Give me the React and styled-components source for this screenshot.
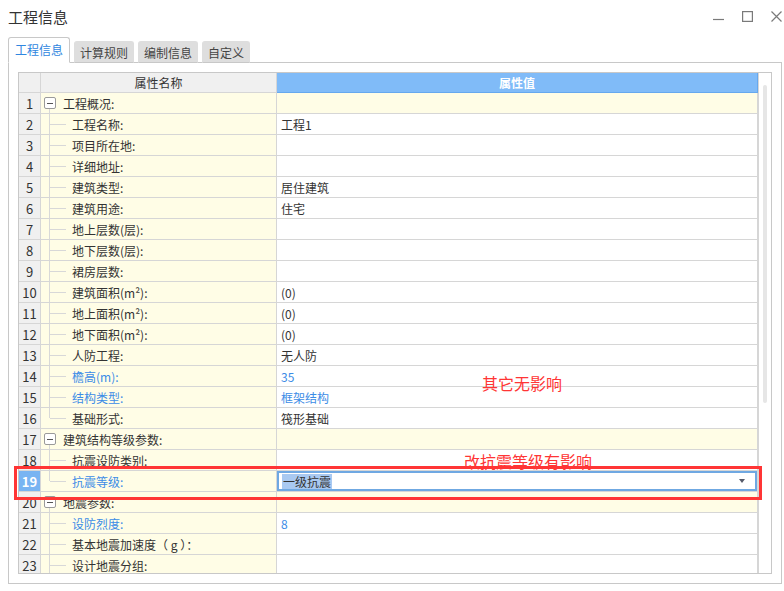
import React from 'react';
import styled, { createGlobalStyle } from 'styled-components';

const Global = createGlobalStyle`
    html, body {
        margin: 0;
        padding: 0;
        background: #ffffff;
    }
    body {
        font-family: "Noto Sans CJK SC", "Microsoft YaHei", sans-serif;
        color: #333333;
    }
`

const Window = styled.div`
    position: relative;
    width: 784px;
    height: 591px;
    overflow: hidden;
    background: #ffffff;
    display: flex;
    flex-direction: column;
`

const TitleBar = styled.div`
    flex-shrink: 0;
    height: 37px;
    display: flex;
    align-items: center;
    justify-content: space-between;
    padding: 0 2px 4px 8px;
    box-sizing: border-box;
`

const Title = styled.div`
    font-size: 15px;
    color: #333;
`

const Controls = styled.div`
    display: flex;
    align-items: center;
    gap: 18px;
`

const ControlButton = styled.svg`
    width: 11px;
    height: 11px;
    stroke: #7a7a7a;
    stroke-width: 1.2;
    fill: none;
`

const Tabs = styled.div`
    flex-shrink: 0;
    display: flex;
    align-items: flex-end;
    gap: 4px;
    padding-left: 8px;
    height: 26px;
    position: relative;
    z-index: 1;
    margin-bottom: -1px;
`

const Tab = styled.div`
    box-sizing: border-box;
    height: ${p => (p.$active ? '26px' : '22px')};
    padding: ${p => (p.$active ? '0 6px 2px' : '0 5px')};
    display: flex;
    align-items: center;
    font-size: 12px;
    border-radius: 3px 3px 0 0;
    color: ${p => (p.$active ? '#2f86e0' : '#444')};
    background: ${p => (p.$active ? '#ffffff' : '#dedede')};
    border: 1px solid ${p => (p.$active ? '#c8c8c8' : '#dedede')};
    border-bottom: ${p => (p.$active ? '1px solid #ffffff' : '1px solid #c8c8c8')};
`

const Panel = styled.div`
    margin: 0 2px 7px 8px;
    flex: 1;
    min-height: 0;
    overflow: hidden;
    border: 1px solid #c8c8c8;
    padding: 9px;
    display: flex;
`

const Table = styled.div`
    flex: 1;
    overflow: hidden;
    border: 1px solid #c8c8c8;
    display: flex;
    background: #ffffff;
`

const Body = styled.div`
    flex: 1;
    display: flex;
    flex-direction: column;
`

const Row = styled.div`
    flex-shrink: 0;
    display: grid;
    grid-template-columns: 22px 236px 1fr;
    height: ${p => (p.$header ? '20px' : '21px')};
`

const Cell = styled.div`
    box-sizing: border-box;
    border-right: 1px solid #d6d6d6;
    border-bottom: 1px solid #d6d6d6;
    display: flex;
    align-items: center;
    font-size: 12px;
    white-space: nowrap;
    overflow: hidden;
`

const HeadCell = styled(Cell)`
    justify-content: center;
    font-size: 12px;
    background: ${p => (p.$blue ? '#80bbf8' : '#f0f0f0')};
    color: ${p => (p.$blue ? '#ffffff' : '#333')};
    font-weight: ${p => (p.$blue ? 'bold' : 'normal')};
    border-color: ${p => (p.$blue ? '#66a8ee' : '#d6d6d6')};
`

const NumCell = styled(Cell)`
    justify-content: center;
    font-size: 13px;
    background: ${p => (p.$selected ? '#78b4f2' : '#f0f0f0')};
    color: ${p => (p.$selected ? '#ffffff' : '#333')};
    font-weight: ${p => (p.$selected ? 'bold' : 'normal')};
`

const guide = '#d8d8d8'

const NameCell = styled(Cell)`
    background-color: #fffde6;
    background-repeat: no-repeat;
    background-image: linear-gradient(${guide}, ${guide}), linear-gradient(${guide}, ${guide});
    background-position: ${p => (p.$group ? '8px 100%, 0 0' : '8px 0, 9px 50%')};
    background-size: ${p =>
        p.$group ? '1px 4px, 0 0' : p.$last ? '1px 50%, 16px 1px' : '1px 100%, 16px 1px'};
    padding-left: ${p => (p.$group ? '3px' : '31px')};
    color: ${p => (p.$blue ? '#3c8ce6' : '#333')};
`

const Toggle = styled.span`
    box-sizing: border-box;
    width: 12px;
    height: 12px;
    border: 1px solid #9a9a9a;
    border-radius: 2px;
    background: #ffffff;
    margin-right: 7px;
    display: flex;
    align-items: center;
    justify-content: center;
    &::before {
        content: '';
        width: 6px;
        height: 1px;
        background: #555;
    }
`

const ValueCell = styled(Cell)`
    background: ${p => (p.$group ? '#fffde6' : '#ffffff')};
    padding-left: ${p => (p.$edit ? '0' : '4px')};
    color: ${p => (p.$blue ? '#3c8ce6' : '#333')};
`

const Select = styled.div`
    box-sizing: border-box;
    width: 100%;
    height: 100%;
    border: 2px solid #6fa8e2;
    display: flex;
    align-items: center;
    justify-content: space-between;
    padding: 0 10px 0 3px;
`

const Highlight = styled.span`
    background: #a9c9f1;
    color: #333;
    padding: 0 1px;
    line-height: 15px;
`

const Arrow = styled.span`
    width: 0;
    height: 0;
    border-left: 3px solid transparent;
    border-right: 3px solid transparent;
    border-top: 4px solid #555a6a;
`

const ScrollTrack = styled.div`
    width: 12px;
    border-left: 1px solid #d6d6d6;
    padding-top: 12px;
    display: flex;
    justify-content: center;
`

const Thumb = styled.div`
    width: 4px;
    height: 318px;
    border-radius: 2px;
    background: #e6e6e6;
`

const Note = styled.div`
    position: absolute;
    left: ${p => p.$x}px;
    top: ${p => p.$y}px;
    color: #ff3535;
    font-size: 16px;
    white-space: nowrap;
`

const Mark = styled.div`
    position: absolute;
    left: 14px;
    top: 466px;
    width: 748px;
    height: 34px;
    box-sizing: border-box;
    border: 3px solid #ff3535;
    pointer-events: none;
`

const rows = [
    { n: 1, group: true, label: '工程概况:' },
    { n: 2, label: '工程名称:', value: '工程1' },
    { n: 3, label: '项目所在地:' },
    { n: 4, label: '详细地址:' },
    { n: 5, label: '建筑类型:', value: '居住建筑' },
    { n: 6, label: '建筑用途:', value: '住宅' },
    { n: 7, label: '地上层数(层):' },
    { n: 8, label: '地下层数(层):' },
    { n: 9, label: '裙房层数:' },
    { n: 10, label: '建筑面积(m²):', value: '(0)' },
    { n: 11, label: '地上面积(m²):', value: '(0)' },
    { n: 12, label: '地下面积(m²):', value: '(0)' },
    { n: 13, label: '人防工程:', value: '无人防' },
    { n: 14, label: '檐高(m):', value: '35', blue: true },
    { n: 15, label: '结构类型:', value: '框架结构', blue: true },
    { n: 16, label: '基础形式:', value: '筏形基础', last: true },
    { n: 17, group: true, label: '建筑结构等级参数:' },
    { n: 18, label: '抗震设防类别:' },
    { n: 19, label: '抗震等级:', value: '一级抗震', blue: true, selected: true, last: true },
    { n: 20, group: true, label: '地震参数:' },
    { n: 21, label: '设防烈度:', value: '8', blue: true },
    { n: 22, label: '基本地震加速度（ g ）：' },
    { n: 23, label: '设计地震分组:' },
]

function WindowControls() {
    return (
        <Controls>
            <ControlButton viewBox="0 0 11 11"><path d="M0 8.5H11" /></ControlButton>
            <ControlButton viewBox="0 0 11 11"><rect x="0.6" y="0.6" width="9.8" height="9.8" /></ControlButton>
            <ControlButton viewBox="0 0 11 11"><path d="M0.5 0.5L10.5 10.5M10.5 0.5L0.5 10.5" /></ControlButton>
        </Controls>
    )
}

function PropertyRow({ row }) {
    return (
        <Row>
            <NumCell $selected={row.selected}>{row.n}</NumCell>
            <NameCell $group={row.group} $last={row.last} $blue={row.blue}>
                {row.group && <Toggle />}
                {row.label}
            </NameCell>
            <ValueCell $group={row.group} $blue={row.blue && !row.selected} $edit={row.selected}>
                {row.selected ? (
                    <Select>
                        <Highlight>{row.value}</Highlight>
                        <Arrow />
                    </Select>
                ) : (
                    row.value
                )}
            </ValueCell>
        </Row>
    )
}

function App() {
    return (
        <Window>
            <Global />
            <TitleBar>
                <Title>工程信息</Title>
                <WindowControls />
            </TitleBar>
            <Tabs>
                <Tab $active>工程信息</Tab>
                <Tab>计算规则</Tab>
                <Tab>编制信息</Tab>
                <Tab>自定义</Tab>
            </Tabs>
            <Panel>
                <Table>
                    <Body>
                        <Row $header>
                            <HeadCell />
                            <HeadCell>属性名称</HeadCell>
                            <HeadCell $blue>属性值</HeadCell>
                        </Row>
                        {rows.map(r => (
                            <PropertyRow key={r.n} row={r} />
                        ))}
                    </Body>
                    <ScrollTrack>
                        <Thumb />
                    </ScrollTrack>
                </Table>
            </Panel>
            <Note $x={482} $y={371}>其它无影响</Note>
            <Note $x={464} $y={449}>改抗震等级有影响</Note>
            <Mark />
        </Window>
    )
}

export default App;
